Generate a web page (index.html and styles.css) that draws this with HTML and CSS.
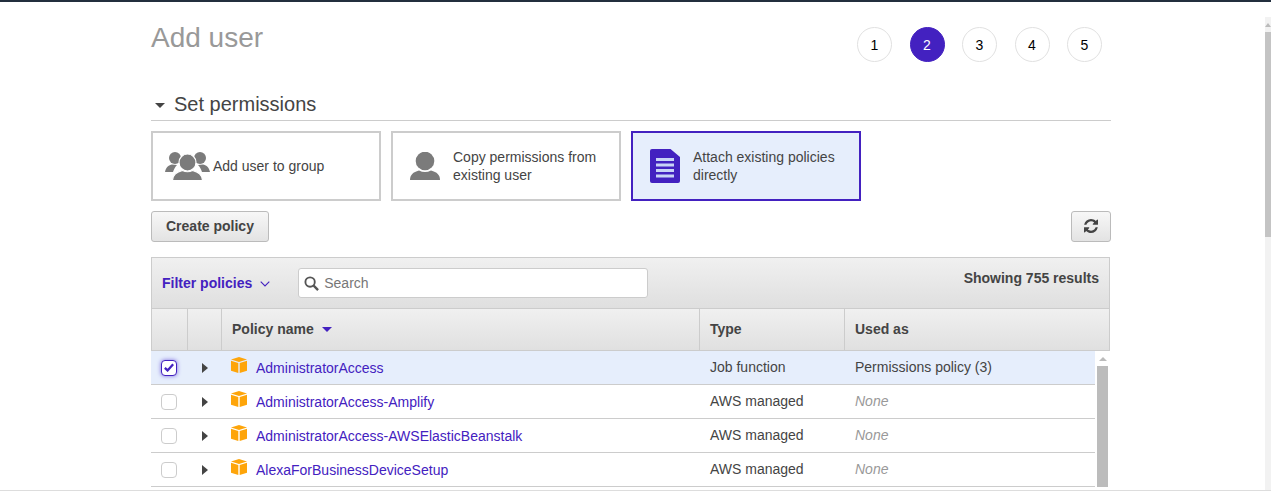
FILE: index.html
```html
<!DOCTYPE html>
<html lang="en">
<head>
<meta charset="utf-8">
<title>Add user</title>
<link rel="stylesheet" href="styles.css">
</head>
<body>
<div class="topbar"></div>
<div class="viewport">
  <main class="page">
    <header class="head">
      <h1 class="title">Add user</h1>
      <ol class="steps">
        <li class="step">1</li>
        <li class="step step-on">2</li>
        <li class="step">3</li>
        <li class="step">4</li>
        <li class="step">5</li>
      </ol>
    </header>
    <h2 class="section"><span class="section-caret"></span>Set permissions</h2>
    <div class="cards">
      <div class="card card-group">
        <svg class="ico-group" viewBox="0 0 45 28"><g fill="#7b7b7b"><circle cx="10" cy="6" r="6"/><circle cx="35" cy="6" r="6"/><path d="M0 20c1-5 4-7 7-7.500l5 .5c-2 2-3 4-4 7z"/><path d="M45 20c-1-5-4-7-7-7.500l-5 .5c2 2 3 4 4 7z"/></g><g fill="#7b7b7b" stroke="#fff" stroke-width="1.200"><circle cx="22.500" cy="10.500" r="8.500"/><path d="M7.500 29c0-6 4-9 10-10.500 3 1.500 7 1.500 10 0 6 1.500 10 4.500 10 10.500z"/></g></svg>
        <span class="card-text">Add user to group</span>
      </div>
      <div class="card card-person">
        <svg class="ico-person" viewBox="0 0 30 28"><g fill="#7b7b7b"><circle cx="15" cy="9" r="9.300"/><path d="M0 28c0-5 3-8 9-9.500 4 2 8 2 12 0 6 1.500 9 4.500 9 9.500z"/></g></svg>
        <span class="card-text">Copy permissions from existing user</span>
      </div>
      <div class="card card-on">
        <svg class="ico-doc" viewBox="0 0 30 34"><path fill="#4321c0" d="M2 0h18.500l9.500 8v24a2 2 0 0 1-2 2H2a2 2 0 0 1-2-2V2a2 2 0 0 1 2-2z"/><g fill="#c9d3f6"><rect x="6" y="9" width="18" height="3"/><rect x="6" y="14.500" width="18" height="3"/><rect x="6" y="20" width="18" height="3"/><rect x="6" y="25.500" width="18" height="3"/></g></svg>
        <span class="card-text">Attach existing policies directly</span>
      </div>
    </div>
    <div class="actions">
      <button class="btn">Create policy</button>
      <button class="btn btn-icon" aria-label="Refresh"><svg class="ico-refresh" viewBox="0 0 1536 1536"><path fill="#444" d="M1511 928q0 5-1 7-64 268-268 434.500t-478 166.500q-146 0-282.500-55t-243.500-157l-129 129q-19 19-45 19t-45-19-19-45v-448q0-26 19-45t45-19h448q26 0 45 19t19 45-19 45l-137 137q71 66 161 102t187 36q134 0 250-65t186-179q11-17 53-117 8-23 30-23h192q13 0 22.500 9.500t9.500 22.500zm25-800v448q0 26-19 45t-45 19h-448q-26 0-45-19t-19-45 19-45l138-138q-148-137-349-137-134 0-250 65t-186 179q-11 17-53 117-8 23-30 23h-199q-13 0-22.500-9.500t-9.500-22.500v-7q65-268 270-434.500t480-166.500q146 0 284 55.500t245 156.500l130-129q19-19 45-19t45 19 19 45z"/></svg></button>
    </div>
    <section class="table">
      <div class="filter">
        <div class="filter-left">
          <span class="filter-label">Filter policies</span>
          <svg class="ico-chev" viewBox="0 0 10 6"><path d="M.7.7 5 5 9.300.7" fill="none" stroke="#4321c0" stroke-width="1.100"/></svg>
          <label class="search">
            <svg class="ico-search" viewBox="0 0 16 16"><circle cx="6.500" cy="6.500" r="5" fill="none" stroke="#555" stroke-width="2"/><path d="M10.300 10.300 15 15" stroke="#555" stroke-width="2.500"/></svg>
            <span class="search-ph">Search</span>
          </label>
        </div>
        <span class="results">Showing 755 results</span>
      </div>
      <div class="row row-head">
        <div class="cell c-check"></div>
        <div class="cell c-arrow"></div>
        <div class="cell c-name">Policy name<span class="sort"></span></div>
        <div class="cell c-type">Type</div>
        <div class="cell c-used">Used as</div>
      </div>
      <div class="rows">
        <div class="row row-on">
          <div class="cell c-check"><span class="box box-on"><svg viewBox="0 0 12 10"><path d="M1 5.500 4.300 8.500 11 1" fill="none" stroke="#4321c0" stroke-width="2.800"/></svg></span></div>
          <div class="cell c-arrow"><span class="tri"></span></div>
          <div class="cell c-name"><svg class="cube" viewBox="0 0 16 16"><path fill="#fea50a" d="M8 0l8 2.500L8 5 0 2.500z"/><path fill="#fea50a" d="M0 3.700l7.300 2.300v10L0 13.700z"/><path fill="#fea50a" d="M16 3.700 8.700 6v10l7.300-2.300z"/></svg><a class="link">AdministratorAccess</a></div>
          <div class="cell c-type">Job function</div>
          <div class="cell c-used">Permissions policy (3)</div>
        </div>
        <div class="row">
          <div class="cell c-check"><span class="box"></span></div>
          <div class="cell c-arrow"><span class="tri"></span></div>
          <div class="cell c-name"><svg class="cube" viewBox="0 0 16 16"><path fill="#fea50a" d="M8 0l8 2.500L8 5 0 2.500z"/><path fill="#fea50a" d="M0 3.700l7.300 2.300v10L0 13.700z"/><path fill="#fea50a" d="M16 3.700 8.700 6v10l7.300-2.300z"/></svg><a class="link">AdministratorAccess-Amplify</a></div>
          <div class="cell c-type">AWS managed</div>
          <div class="cell c-used none">None</div>
        </div>
        <div class="row">
          <div class="cell c-check"><span class="box"></span></div>
          <div class="cell c-arrow"><span class="tri"></span></div>
          <div class="cell c-name"><svg class="cube" viewBox="0 0 16 16"><path fill="#fea50a" d="M8 0l8 2.500L8 5 0 2.500z"/><path fill="#fea50a" d="M0 3.700l7.300 2.300v10L0 13.700z"/><path fill="#fea50a" d="M16 3.700 8.700 6v10l7.300-2.300z"/></svg><a class="link">AdministratorAccess-AWSElasticBeanstalk</a></div>
          <div class="cell c-type">AWS managed</div>
          <div class="cell c-used none">None</div>
        </div>
        <div class="row">
          <div class="cell c-check"><span class="box"></span></div>
          <div class="cell c-arrow"><span class="tri"></span></div>
          <div class="cell c-name"><svg class="cube" viewBox="0 0 16 16"><path fill="#fea50a" d="M8 0l8 2.500L8 5 0 2.500z"/><path fill="#fea50a" d="M0 3.700l7.300 2.300v10L0 13.700z"/><path fill="#fea50a" d="M16 3.700 8.700 6v10l7.300-2.300z"/></svg><a class="link">AlexaForBusinessDeviceSetup</a></div>
          <div class="cell c-type">AWS managed</div>
          <div class="cell c-used none">None</div>
        </div>
        <div class="inner-scroll"><span class="inner-arrow"></span><span class="inner-thumb"></span></div>
      </div>
    </section>
  </main>
  <div class="page-scroll"><span class="page-arrow"></span><span class="page-thumb"></span></div>
</div>
<div class="footer"></div>
</body>
</html>
```
FILE: styles.css
```css
* { box-sizing: border-box; }
html, body { margin: 0; height: 100%; overflow: hidden; }
body {
  display: flex;
  flex-direction: column;
  background: #fff;
  color: #444;
  font: 14px/18px "Liberation Sans", Arial, sans-serif;
}
.topbar { height: 2px; flex: none; background: #232f3e; }
.viewport { flex: 1; min-height: 0; display: flex; overflow: hidden; }
.page { flex: 1; min-width: 0; padding: 0 0 0 151px; overflow: hidden; }
.head { width: 960px; height: 84px; display: flex; justify-content: space-between; align-items: flex-start; }
.title { margin: 20px 0 0; font-size: 28px; line-height: 32px; font-weight: 400; color: #999; }
.steps { display: flex; gap: 17.500px; list-style: none; margin: 25px 9px 0 0; padding: 0; }
.step {
  width: 35px; height: 35px; border-radius: 50%;
  border: 1px solid #e1e1e1; background: #fff; color: #000;
  display: flex; align-items: center; justify-content: center;
}
.step-on { background: #4321c0; border-color: #4321c0; color: #fff; }
.section {
  width: 960px; height: 35px; margin: 0; padding-top: 2px;
  display: flex; align-items: center;
  font-size: 20px; font-weight: 400; color: #444;
  border-bottom: 1px solid #ccc;
}
.section-caret {
  width: 0; height: 0; margin: 3px 9px 0 4px; flex: none;
  border: 5px solid transparent; border-top-color: #444; border-bottom-width: 0;
}
.cards { display: flex; gap: 10px; margin-top: 10px; }
.card {
  width: 230px; height: 70px; padding: 0 14px;
  display: flex; align-items: center;
  border: 2px solid #ccc;
}
.card-on { border-color: #4321c0; background: #e6eefc; }
.card-group { padding-left: 12px; }
.ico-group { width: 45px; height: 28px; margin-right: 3px; flex: none; }
.card-person { padding-left: 17px; }
.ico-person { width: 30px; height: 28px; margin-right: 13px; flex: none; }
.ico-doc { width: 30px; height: 34px; margin-right: 13px; flex: none; margin-left: 3px; }
.actions { width: 960px; display: flex; justify-content: space-between; margin-top: 10px; }
.btn {
  height: 31px; padding: 0 14px 2px;
  border: 1px solid #bbb; border-radius: 3px;
  background: linear-gradient(#f7f7f7, #e3e3e3);
  color: #444; font: bold 14px "Liberation Sans", Arial, sans-serif;
}
.btn-icon { width: 40px; padding: 0 1px 2px 0; display: flex; align-items: center; justify-content: center; }
.ico-refresh { width: 14px; height: 14px; }
.table { width: 959px; margin-top: 15px; border-top: 1px solid #ccc; }
.filter {
  height: 51px; padding: 0 10px 0 10px;
  display: flex; justify-content: space-between; align-items: flex-start;
  background: linear-gradient(#f0f0f0, #dfdfdf);
  border: solid #ccc; border-width: 0 1px 1px;
}
.filter-left { display: flex; align-items: center; height: 50px; }
.filter-label { color: #4321c0; font-weight: 700; }
.ico-chev { width: 10px; height: 6px; margin: 2px 0 0 8px; }
.search {
  width: 350px; height: 30px; margin-left: 28px; padding-left: 5px;
  display: flex; align-items: center; gap: 5px;
  background: #fff; border: 1px solid #ccc; border-radius: 3px;
}
.ico-search { width: 15px; height: 15px; }
.search-ph { color: #777; }
.results { margin: 11px 0 0; font-weight: 700; }
.row { display: flex; height: 34px; padding-left: 1px; border-bottom: 1px solid #ccc; }
.row-head {
  height: 42px; padding-left: 0; font-weight: 700;
  background: linear-gradient(#f0f0f0, #e0e0e0);
  border-left: 1px solid #ccc; border-right: 1px solid #ccc;
}
.cell { display: flex; align-items: center; padding: 0 10px; flex: none; }
.c-check { width: 36px; padding: 0; justify-content: center; }
.c-arrow { width: 34px; padding: 0; justify-content: center; }
.c-name { width: 478px; }
.c-type { width: 145px; padding-bottom: 2px; }
.c-used { flex: 1; padding-bottom: 2px; }
.row-head .cell { border-left: 1px solid #ccc; padding-bottom: 2px; }
.row-head .c-check { width: 35px; border-left: 0; }
.sort { width: 0; height: 0; margin: 2px 0 0 8px; border: 5px solid transparent; border-top-color: #4321c0; border-bottom-width: 0; }
.rows { position: relative; padding-right: 15px; }
.row-on { background: #e6eefc; }
.box {
  width: 16px; height: 16px; margin-right: 2px;
  display: flex; align-items: center; justify-content: center;
  background: #fff; border: 1px solid #ccc; border-radius: 4px;
}
.box-on { border-color: #4321c0; box-shadow: 0 0 4px #7d6be0; }
.box-on svg { width: 10px; height: 9px; }
.tri { width: 0; height: 0; border: 5px solid transparent; border-left: 6px solid #444; border-right-width: 0; }
.cube { width: 16px; height: 16px; margin: -5px 9px 0 -1px; flex: none; align-self: center; }
.link { color: #4321c0; }
.none { color: #999; font-style: italic; }
.inner-scroll {
  position: absolute; top: 0; right: 1px; bottom: 0; width: 13px;
  display: flex; flex-direction: column; align-items: center;
}
.inner-arrow { width: 0; height: 0; margin-top: 6px; border: 4px solid transparent; border-bottom: 4px solid #bbb; border-top-width: 0; }
.inner-thumb { width: 11px; flex: 1; margin-top: 5px; background: #bcbcbc; }
.page-scroll {
  width: 6px; flex: none; margin: 15px 0 0 1px; background: #f2f2f2;
  display: flex; flex-direction: column; align-items: center;
}
.page-arrow { width: 0; height: 0; margin-top: 6px; border: 3px solid transparent; border-bottom: 4px solid #bbb; border-top-width: 0; }
.page-thumb { width: 6px; height: 205px; margin-top: 5px; background: #c4c4c4; }
.footer { height: 4px; flex: none; background: #fff; border-top: 1px solid #ddd; }
```
